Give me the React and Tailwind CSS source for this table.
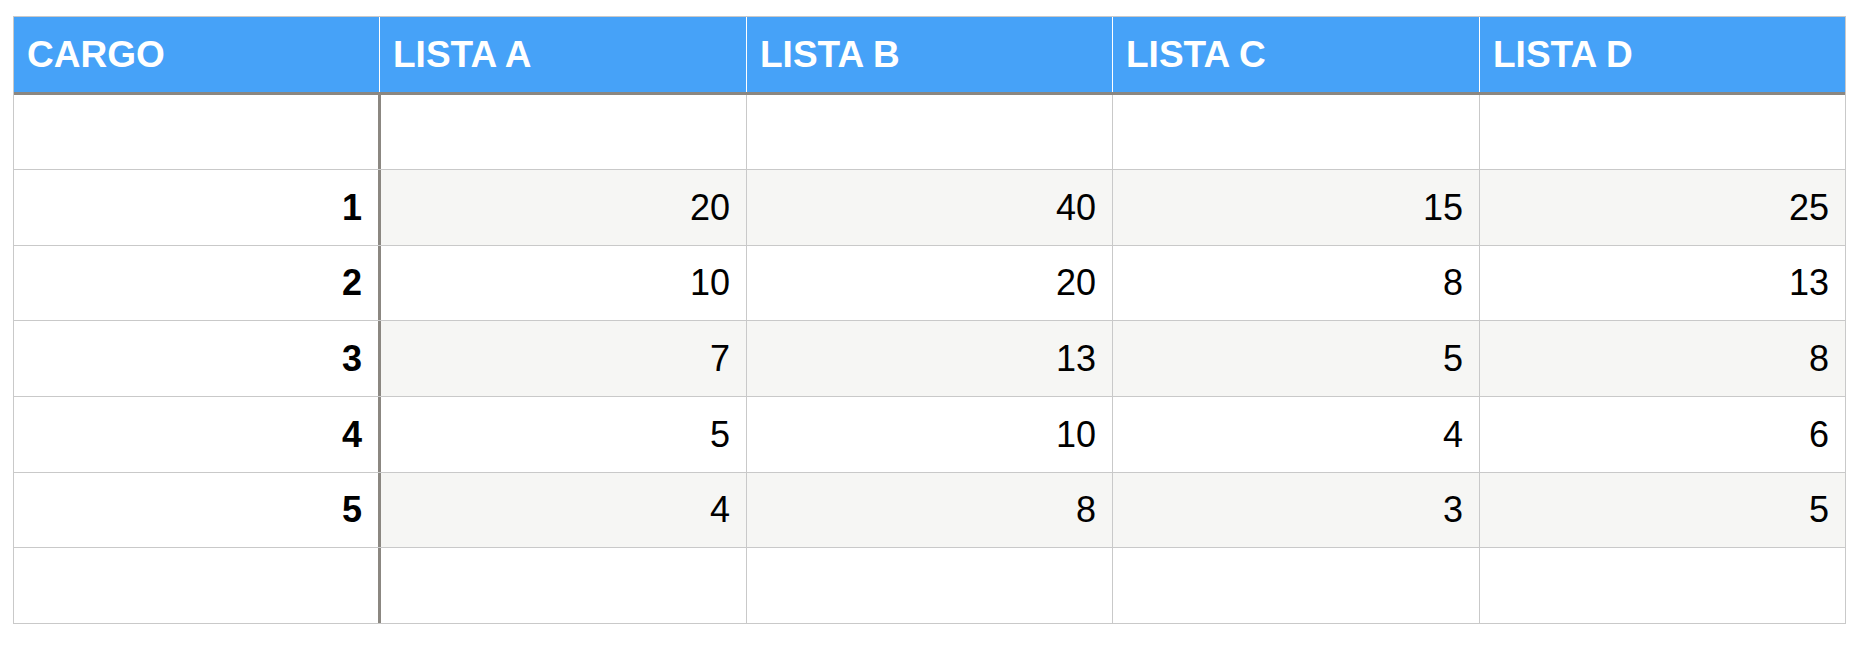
const rows = [
  { label: "", vals: ["", "", "", ""], h: "h-[75px]", shade: false },
  { label: "1", vals: ["20", "40", "15", "25"], h: "h-[76px]", shade: true },
  { label: "2", vals: ["10", "20", "8", "13"], h: "h-[75px]", shade: false },
  { label: "3", vals: ["7", "13", "5", "8"], h: "h-[76px]", shade: true },
  { label: "4", vals: ["5", "10", "4", "6"], h: "h-[76px]", shade: false },
  { label: "5", vals: ["4", "8", "3", "5"], h: "h-[75px]", shade: true },
  { label: "", vals: ["", "", "", ""], h: "h-[75px]", shade: false, last: true },
];

const bodyWidths = ["w-[366px]", "w-[366px]", "w-[367px]", "flex-1"];
const headWidths = ["w-[367px]", "w-[366px]", "w-[367px]", "flex-1"];
const heads = ["LISTA A", "LISTA B", "LISTA C", "LISTA D"];

export default function App() {
  return (
    <div className="min-h-screen bg-white pl-[13px] pt-[16px]" style={{ fontFamily: '"Liberation Sans", Arial, Helvetica, sans-serif' }}>
      <div className="w-[1833px] border border-[#c9c9c9]">
        <div className="flex h-[78px] bg-[#46a2f8] border-b-[3px] border-b-[#8b8781]">
          <div className="w-[366px] border-r border-r-white flex items-center px-[13px] text-[37px] font-bold text-white leading-none">
            CARGO
          </div>
          {heads.map((h, i) => (
            <div
              key={h}
              className={`${headWidths[i]} ${i < 3 ? "border-r border-r-white" : ""} flex items-center px-[13px] text-[37px] font-bold text-white leading-none`}
            >
              {h}
            </div>
          ))}
        </div>
        {rows.map((r, ri) => (
          <div key={ri} className={`flex ${r.h} ${r.last ? "" : "border-b border-b-[#c9c9c9]"}`}>
            <div className="w-[367px] border-r-[3px] border-r-[#8b8781] bg-white flex items-center justify-end pr-4 text-[36px] font-bold text-black leading-none">
              {r.label}
            </div>
            {r.vals.map((v, ci) => (
              <div
                key={ci}
                className={`${bodyWidths[ci]} ${ci < 3 ? "border-r border-r-[#c9c9c9]" : ""} ${r.shade ? "bg-[#f6f6f4]" : "bg-white"} flex items-center justify-end pr-4 text-[36px] text-black leading-none`}
              >
                {v}
              </div>
            ))}
          </div>
        ))}
      </div>
    </div>
  );
}
